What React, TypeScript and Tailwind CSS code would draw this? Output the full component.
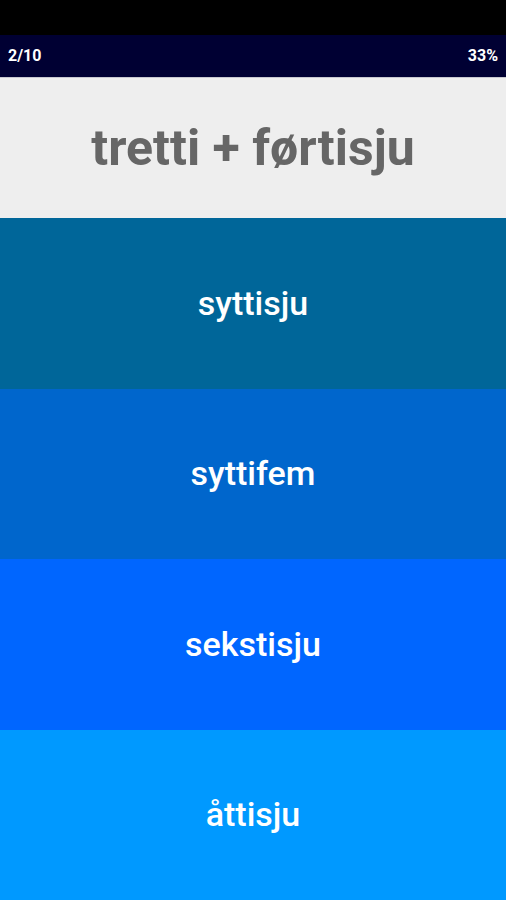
const answers = [
  { label: 'syttisju', bg: 'bg-[#006699]' },
  { label: 'syttifem', bg: 'bg-[#0066cc]' },
  { label: 'sekstisju', bg: 'bg-[#0066ff]' },
  { label: 'åttisju', bg: 'bg-[#0099ff]' },
]

export default function App() {
  return (
    <div className="flex h-[900px] w-full flex-col bg-black font-['Roboto',sans-serif]">
      <div className="h-[35px] bg-black" />
      <div className="flex h-[42px] items-center justify-between bg-[#000033] px-2 text-[16px] font-bold text-white">
        <span>2/10</span>
        <span>33%</span>
      </div>
      <div className="flex h-[141px] items-center justify-center border-t border-[#c8c8d0] bg-[#eeeeee]">
        <h1 className="text-[50px] font-bold text-[#666666]">tretti + førtisju</h1>
      </div>
      {answers.map((a) => (
        <button
          key={a.label}
          className={`flex flex-1 items-center justify-center ${a.bg} text-[34px] font-medium text-white`}
        >
          {a.label}
        </button>
      ))}
    </div>
  )
}
